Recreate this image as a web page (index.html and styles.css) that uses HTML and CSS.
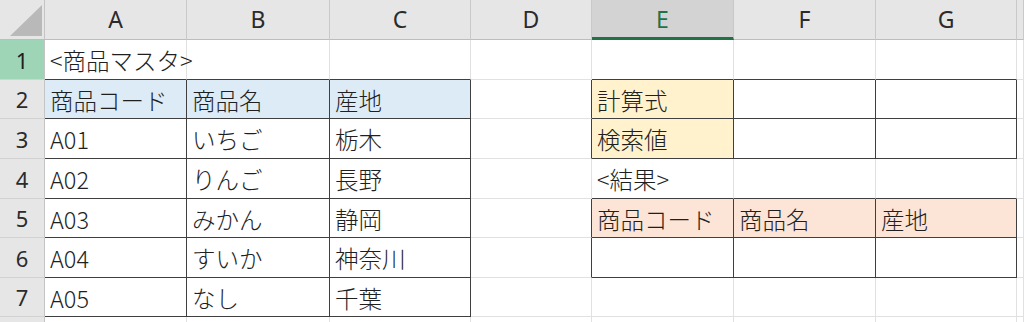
FILE: index.html
```html
<!DOCTYPE html>
<html lang="ja">
<head>
<meta charset="utf-8">
<title>商品マスタ</title>
<link rel="stylesheet" href="styles.css">
</head>
<body>
<div class="sheet">
  <!-- header row -->
  <div class="corner"><svg width="44" height="39" viewBox="0 0 44 39"><polygon points="10,36 42,36 42,5" fill="#b9b9b9"/></svg></div>
  <div class="colh">A</div>
  <div class="colh">B</div>
  <div class="colh">C</div>
  <div class="colh">D</div>
  <div class="colh active">E</div>
  <div class="colh">F</div>
  <div class="colh">G</div>
  <div class="colh last"></div>

  <!-- row 1 -->
  <div class="rowh sel">1</div>
  <div class="cell bb spill">&lt;商品マスタ&gt;</div>
  <div class="cell bb"></div>
  <div class="cell bb"></div>
  <div class="cell"></div>
  <div class="cell bb"></div>
  <div class="cell bb"></div>
  <div class="cell bb"></div>
  <div class="cell"></div>

  <!-- row 2 -->
  <div class="rowh">2</div>
  <div class="cell blue br bb">商品コード</div>
  <div class="cell blue br bb">商品名</div>
  <div class="cell blue br bb">産地</div>
  <div class="cell br"></div>
  <div class="cell yellow br bb">計算式</div>
  <div class="cell br bb"></div>
  <div class="cell br bb"></div>
  <div class="cell"></div>

  <!-- row 3 -->
  <div class="rowh">3</div>
  <div class="cell br bb">A01</div>
  <div class="cell br bb">いちご</div>
  <div class="cell br bb">栃木</div>
  <div class="cell br"></div>
  <div class="cell yellow br bb">検索値</div>
  <div class="cell br bb"></div>
  <div class="cell br bb"></div>
  <div class="cell"></div>

  <!-- row 4 -->
  <div class="rowh">4</div>
  <div class="cell br bb">A02</div>
  <div class="cell br bb">りんご</div>
  <div class="cell br bb">長野</div>
  <div class="cell"></div>
  <div class="cell bb spill">&lt;結果&gt;</div>
  <div class="cell bb"></div>
  <div class="cell bb"></div>
  <div class="cell"></div>

  <!-- row 5 -->
  <div class="rowh">5</div>
  <div class="cell br bb">A03</div>
  <div class="cell br bb">みかん</div>
  <div class="cell br bb">静岡</div>
  <div class="cell br"></div>
  <div class="cell orange br bb">商品コード</div>
  <div class="cell orange br bb">商品名</div>
  <div class="cell orange br bb">産地</div>
  <div class="cell"></div>

  <!-- row 6 -->
  <div class="rowh">6</div>
  <div class="cell br bb">A04</div>
  <div class="cell br bb">すいか</div>
  <div class="cell br bb">神奈川</div>
  <div class="cell br"></div>
  <div class="cell br bb"></div>
  <div class="cell br bb"></div>
  <div class="cell br bb"></div>
  <div class="cell"></div>

  <!-- row 7 -->
  <div class="rowh">7</div>
  <div class="cell br bb">A05</div>
  <div class="cell br bb">なし</div>
  <div class="cell br bb">千葉</div>
  <div class="cell"></div>
  <div class="cell"></div>
  <div class="cell"></div>
  <div class="cell"></div>
  <div class="cell"></div>

  <!-- row 8 (partial) -->
  <div class="rowh"></div>
  <div class="cell"></div>
  <div class="cell"></div>
  <div class="cell"></div>
  <div class="cell"></div>
  <div class="cell"></div>
  <div class="cell"></div>
  <div class="cell"></div>
  <div class="cell"></div>
</div>
</body>
</html>
```

FILE: styles.css
```css
html, body {
  margin: 0;
  padding: 0;
  background: #ffffff;
  overflow: hidden;
}

.sheet {
  display: grid;
  grid-template-columns: 45px 142px 143px 141px 121px 142px 142px 141px 1fr;
  grid-template-rows: 40px 40px 39px 40px 40px 39px 40px 39px 20px;
  width: 1024px;
  height: 322px;
  overflow: hidden;
  font-family: "Noto Sans CJK JP", "Noto Sans", sans-serif;
  font-size: 23.5px;
  font-weight: 300;
  color: #1f1f1f;
}

.sheet > div {
  box-sizing: border-box;
  overflow: hidden;
  white-space: nowrap;
}

.sheet > .spill {
  overflow: visible;
}

.corner {
  background: #e6e6e6;
  border-right: 1px solid #c4c4c4;
  border-bottom: 1px solid #bdbdbd;
}
.corner svg {
  display: block;
}

.colh {
  background: #e6e6e6;
  border-right: 1px solid #c9c9c9;
  border-bottom: 1px solid #bdbdbd;
  display: flex;
  align-items: center;
  justify-content: center;
  font-family: "Noto Sans", "Noto Sans CJK JP", sans-serif;
  font-size: 23px;
  font-weight: 400;
  color: #2b2b2b;
  padding-bottom: 1px;
}
.colh.active {
  background: #d3d3d3;
  color: #217346;
  border-bottom: 3px solid #217346;
  padding-top: 2px;
}

.rowh {
  background: #e6e6e6;
  border-right: 1px solid #c4c4c4;
  border-bottom: 1px solid #d2d2d2;
  display: flex;
  align-items: center;
  justify-content: center;
  font-family: "Noto Sans", "Noto Sans CJK JP", sans-serif;
  font-size: 22px;
  font-weight: 400;
  color: #2b2b2b;
}
.rowh.sel {
  background: #9fd5b7;
  color: #1e1e1e;
}

.cell {
  border-right: 1px solid #e1e1e1;
  border-bottom: 1px solid #e1e1e1;
  display: flex;
  align-items: center;
  padding-left: 5px;
  padding-top: 1px;
}

.cell.br {
  border-right-color: #3f3f3f;
}
.cell.bb {
  border-bottom-color: #3f3f3f;
}

.blue {
  background: #ddebf7;
}
.yellow {
  background: #fff2cc;
}
.orange {
  background: #fce4d6;
}
```
